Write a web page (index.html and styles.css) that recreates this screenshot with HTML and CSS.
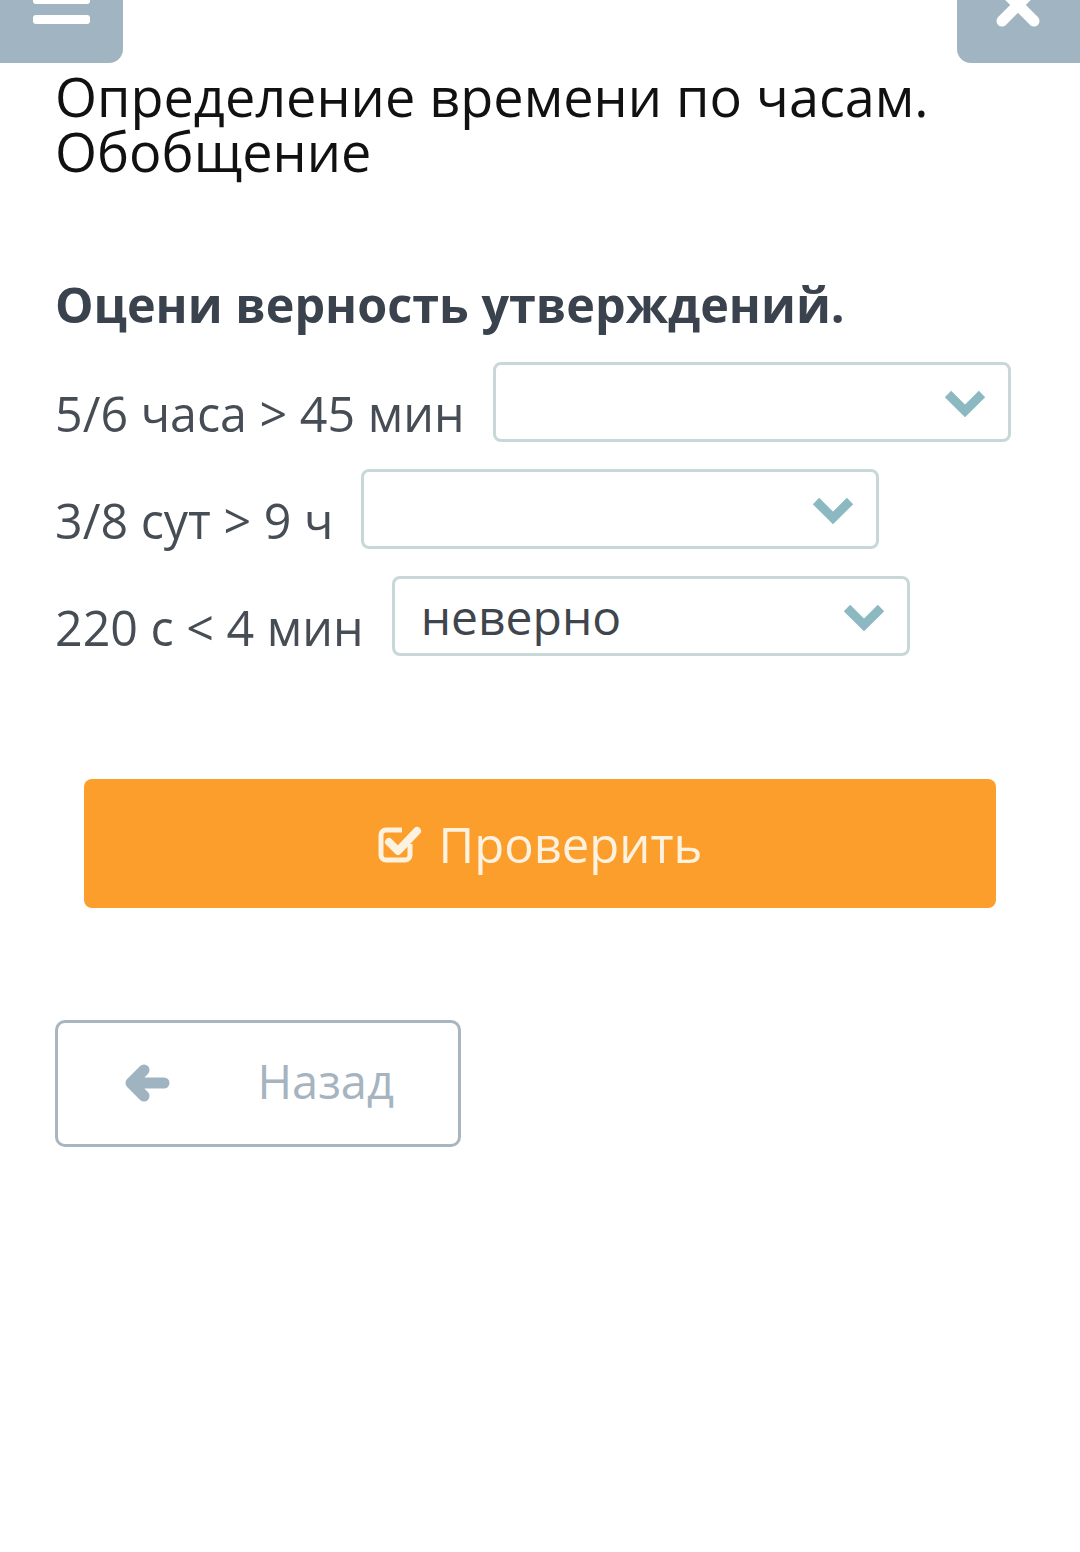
FILE: index.html
```html
<!DOCTYPE html>
<html lang="ru">
<head>
    <meta charset="UTF-8">
    <meta name="viewport" content="width=device-width, initial-scale=1.0">
    <title>Определение времени по часам. Обобщение</title>
    <link rel="stylesheet" href="styles.css">
</head>
<body>
    <div class="topbar">
        <button class="top-button menu-button" aria-label="Меню">
            <svg width="123" height="63" viewBox="0 0 123 63">
                <rect x="33" y="-6" width="57" height="10" rx="3" fill="#fff"/>
                <rect x="33" y="15" width="57" height="9" rx="3" fill="#fff"/>
            </svg>
        </button>
        <button class="top-button close-button" aria-label="Закрыть">
            <svg width="123" height="63" viewBox="0 0 123 63">
                <path d="M45 -11 L77 21 M77 -11 L45 21" stroke="#fff" stroke-width="11" stroke-linecap="round"/>
            </svg>
        </button>
    </div>

    <div class="content">
        <h1 class="lesson-title">Определение времени по часам. Обобщение</h1>
        <h2 class="task-title">Оцени верность утверждений.</h2>

        <div class="statements">
            <div class="statement">
                <span class="statement-text">5/6 часа &gt; 45 мин</span>
                <div class="select-box">
                    <span class="select-value"></span>
                    <svg class="chevron" width="44" height="30" viewBox="0 0 44 30"><path d="M5 6 L22 23 L39 6" fill="none" stroke="#8cb8c2" stroke-width="9"/></svg>
                </div>
            </div>
            <div class="statement">
                <span class="statement-text">3/8 сут &gt; 9 ч</span>
                <div class="select-box">
                    <span class="select-value"></span>
                    <svg class="chevron" width="44" height="30" viewBox="0 0 44 30"><path d="M5 6 L22 23 L39 6" fill="none" stroke="#8cb8c2" stroke-width="9"/></svg>
                </div>
            </div>
            <div class="statement">
                <span class="statement-text">220 с &lt; 4 мин</span>
                <div class="select-box">
                    <span class="select-value">неверно</span>
                    <svg class="chevron" width="44" height="30" viewBox="0 0 44 30"><path d="M5 6 L22 23 L39 6" fill="none" stroke="#8cb8c2" stroke-width="9"/></svg>
                </div>
            </div>
        </div>

        <button class="check-button">
            <svg width="44" height="40" viewBox="0 0 44 40">
                <path d="M32 20 V31 a5 5 0 0 1 -5 5 H8 a5 5 0 0 1 -5 -5 V11 a5 5 0 0 1 5 -5 H24" fill="none" stroke="#fdf1e0" stroke-width="5"/>
                <path d="M11 18 L20 27 L39 7" fill="none" stroke="#fdf1e0" stroke-width="8" stroke-linecap="round" stroke-linejoin="round"/>
            </svg>
            <span>Проверить</span>
        </button>

        <button class="back-button">
            <svg width="46" height="38" viewBox="0 0 46 38">
                <path d="M20 6 L7 19 L20 32 M9 19 H40" fill="none" stroke="#9fb3c1" stroke-width="11" stroke-linecap="round" stroke-linejoin="round"/>
            </svg>
            <span>Назад</span>
        </button>
    </div>
</body>
</html>
```

FILE: styles.css
```css
body {
    margin: 0;
    background: #fff;
    font-family: "Open Sans", "Noto Sans", sans-serif;
    color: #474d55;
}
button {
    font-family: inherit;
    cursor: pointer;
}
.topbar {
    display: flex;
    justify-content: space-between;
    height: 63px;
}
.top-button {
    width: 123px;
    height: 63px;
    padding: 0;
    border: none;
    background-color: #a0b4c2;
    overflow: hidden;
}
.top-button svg {
    display: block;
}
.menu-button {
    border-bottom-right-radius: 14px;
}
.close-button {
    border-bottom-left-radius: 14px;
}
.content {
    padding: 0 68px 0 55px;
}
.lesson-title {
    margin: 6px 0 0;
    font-size: 54px;
    line-height: 55px;
    font-weight: 400;
    color: #111;
}
.task-title {
    margin: 97px 0 0;
    font-size: 48.5px;
    line-height: 56px;
    font-weight: 700;
    color: #3a424d;
}
.statements {
    margin-top: 30px;
    display: flex;
    flex-direction: column;
    gap: 27px;
}
.statement {
    display: flex;
    align-items: flex-end;
    gap: 28px;
}
.statement-text {
    font-size: 48.4px;
    line-height: 58px;
    white-space: nowrap;
}
.select-box {
    display: flex;
    align-items: center;
    justify-content: space-between;
    box-sizing: border-box;
    width: 518px;
    height: 80px;
    padding: 0 21px 0 26px;
    border: 3px solid #c8d8d8;
    border-radius: 8px;
}
.select-value {
    font-size: 48px;
    color: #3f454d;
}
.chevron {
    display: block;
    margin-top: 2px;
}
.check-button {
    display: flex;
    align-items: center;
    justify-content: center;
    gap: 17px;
    width: 912px;
    height: 129px;
    margin: 123px 0 0 29px;
    border: none;
    border-radius: 8px;
    background-color: #fc9e2c;
    color: #fdf1e0;
    font-size: 49px;
}
.check-button svg {
    display: block;
}
.back-button {
    display: flex;
    align-items: center;
    justify-content: space-between;
    box-sizing: border-box;
    width: 406px;
    height: 127px;
    margin-top: 112px;
    padding: 0 64px 6px 66px;
    border: 3px solid #a9b6bf;
    border-radius: 10px;
    background: #fff;
    color: #a5b4bf;
    font-size: 47px;
}
.back-button svg {
    display: block;
    margin-top: 4px;
}
```
